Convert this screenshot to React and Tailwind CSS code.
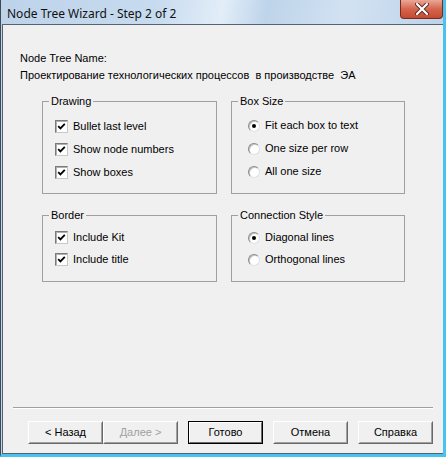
import React from 'react';

const CheckBox = ({ label, checked = true }) => (
  <div className="flex items-center h-[13px] gap-[5px]">
    <span className="w-[13px] h-[13px] flex items-center justify-center bg-white border border-t-[#7a7a7a] border-l-[#7a7a7a] border-b-[#c8c8c8] border-r-[#c8c8c8] shadow-[inset_1px_1px_0_#b0b0b0]">
      {checked && (
        <svg width="9" height="9" viewBox="0 0 9 9">
          <path d="M1.2 4.2 L3.4 6.4 L7.8 1.8" fill="none" stroke="#000" strokeWidth="1.8" />
        </svg>
      )}
    </span>
    <span>{label}</span>
  </div>
);

const Radio = ({ label, checked = false }) => (
  <div className="flex items-center h-[13px] gap-[5px]">
    <span className="w-[12px] h-[12px] rounded-full flex items-center justify-center bg-white border border-t-[#8a8a8a] border-l-[#8a8a8a] border-b-[#e0e0e0] border-r-[#e0e0e0] shadow-[inset_1px_1px_0_#c4c4c4]">
      {checked && <span className="w-[4px] h-[4px] rounded-full bg-black" />}
    </span>
    <span>{label}</span>
  </div>
);

const Group = ({ title, className, children }) => (
  <fieldset className={`border border-[#a0a0a0] ${className}`}>
    <legend className="ml-[6px] px-[2px] leading-[13px]">{title}</legend>
    {children}
  </fieldset>
);

const Button = ({ children, disabled, isDefault }) => (
  <div
    className={`w-[75px] h-[23px] flex items-center justify-center ${
      isDefault ? 'border border-black' : 'border border-t-white border-l-white border-b-[#696969] border-r-[#696969]'
    }`}
  >
    <div
      className={`w-full h-full flex items-center justify-center bg-[#f0f0f0] ${
        isDefault
          ? 'border border-t-white border-l-white border-b-[#696969] border-r-[#696969]'
          : 'border border-t-[#f0f0f0] border-l-[#f0f0f0] border-b-[#a0a0a0] border-r-[#a0a0a0]'
      } ${disabled ? 'text-[#a0a0a0]' : 'text-black'}`}
    >
      {children}
    </div>
  </div>
);

export default function App() {
  return (
    <div className="w-[446px] h-[457px] flex flex-col bg-[#bfd4ea] border-l border-l-[#3f4a57] border-r-[3px] border-r-[#49c3ee] border-b-[3px] border-b-[#49c3ee] font-['Liberation_Sans',Arial,sans-serif] text-[11px] text-black overflow-hidden">
      {/* Title bar */}
      <div className="h-[24px] flex items-start justify-between bg-[linear-gradient(100deg,#bdd3ea_0%,#c7dbef_35%,#e2edf8_50%,#bed4ea_60%,#d2e2f2_78%,#bcd3ea_100%)]">
        <span className="pl-[6px] pt-[6px] text-[12px] leading-[16px] font-['Noto_Sans',sans-serif] text-[#111]">
          Node Tree Wizard - Step 2 of 2
        </span>
        <div className="w-[43px] h-[19px] flex items-center justify-center rounded-b-[4px] border border-t-0 border-[#7a2a1c] bg-linear-to-b from-[#eaa796] via-[#d5654d] to-[#c44a31]">
          <svg width="14" height="12" viewBox="0 0 14 12">
            <path d="M2 1 L12 11 M12 1 L2 11" stroke="#5a2a22" strokeWidth="4" strokeLinecap="round" />
            <path d="M2 1 L12 11 M12 1 L2 11" stroke="#ffffff" strokeWidth="2.2" strokeLinecap="round" />
          </svg>
        </div>
      </div>

      {/* Client area */}
      <div className="flex-1 flex flex-col ml-[1px] bg-[#f0f0f0] border-l border-t border-b border-[#56626f]">
        <div className="pl-[17px] pt-[27px]">
          <p className="leading-[13px]">Node Tree Name:</p>
          <p className="mt-[4px] leading-[13px] whitespace-pre">
            Проектирование технологических процессов  в производстве  ЭА
          </p>

          <div className="ml-[22px] mt-[13px] grid grid-cols-[175px_174px] gap-x-[14px] gap-y-[15px]">
            <Group title="Drawing" className="h-[99px]">
              <div className="pl-[12px] pt-[12px] flex flex-col gap-[10px]">
                <CheckBox label="Bullet last level" />
                <CheckBox label="Show node numbers" />
                <CheckBox label="Show boxes" />
              </div>
            </Group>
            <Group title="Box Size" className="h-[99px]">
              <div className="pl-[16px] pt-[11px] flex flex-col gap-[10px]">
                <Radio label="Fit each box to text" checked />
                <Radio label="One size per row" />
                <Radio label="All one size" />
              </div>
            </Group>
            <Group title="Border" className="h-[73px]">
              <div className="pl-[12px] pt-[9px] flex flex-col gap-[9px]">
                <CheckBox label="Include Kit" />
                <CheckBox label="Include title" />
              </div>
            </Group>
            <Group title="Connection Style" className="h-[73px]">
              <div className="pl-[16px] pt-[9px] flex flex-col gap-[9px]">
                <Radio label="Diagonal lines" checked />
                <Radio label="Orthogonal lines" />
              </div>
            </Group>
          </div>
        </div>

        {/* Footer */}
        <div className="mt-auto pb-[9px]">
          <div className="mx-[10px] h-[2px] border-t border-t-[#a0a0a0] border-b border-b-white" />
          <div className="mt-[12px] pl-[25px] flex">
            <Button>&lt; Назад</Button>
            <Button disabled>Далее &gt;</Button>
            <div className="ml-[10px] flex gap-[10px]">
              <Button isDefault>Готово</Button>
              <Button>Отмена</Button>
              <Button>Справка</Button>
            </div>
          </div>
        </div>
      </div>
    </div>
  );
}
